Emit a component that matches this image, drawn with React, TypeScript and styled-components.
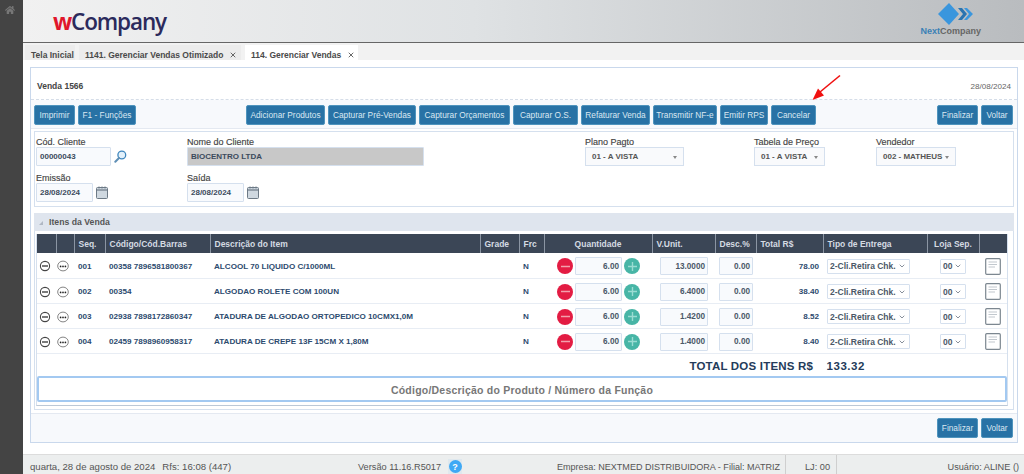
import React from "react";
import styled, { createGlobalStyle } from "styled-components";
import { FaHome } from "react-icons/fa";
import { X, ChevronDown } from "lucide-react";

const Global = createGlobalStyle`
  html, body { margin: 0; padding: 0; width: 1024px; height: 474px; overflow: hidden; background: #fff; }
  * { box-sizing: border-box; }
  body { font-family: "Liberation Sans", Arial, sans-serif; }
`;

const Page = styled.div`display: flex; width: 1024px; height: 474px; position: relative; overflow: hidden;`;
const Sidebar = styled.aside`width: 23px; background: #444; color: #777; padding: 5px 0 0 5px; font-size: 10px; flex: none;`;
const Main = styled.div`flex: 1; display: flex; flex-direction: column; min-width: 0;`;

const Header = styled.header`
  height: 43px; flex: none; display: flex; justify-content: space-between;
  background: linear-gradient(90deg, #f1f1f1 0%, #dfe2e4 45%, #b9bcbf 100%);
  border-bottom: 1px solid #666; padding: 7px 43px 0 30px;
`;
const Logo = styled.div`
  font-family: "Open Sans", sans-serif; font-weight: 600; font-size: 22.5px; line-height: 30px;
  letter-spacing: -1.15px; color: #2b2a5c;
`;
const LogoW = styled.span`color: #e0162b; font-weight: 700;`;
const Brand = styled.div`display: flex; flex-direction: column; align-items: center; margin-top: -5px;`;
const BrandMarkWrap = styled.div`margin-left: 10px; height: 23px;`;
const BrandText = styled.div`font-size: 9px; font-weight: 700; color: #666; line-height: 10px; margin-top: 1px;`;
const BrandNext = styled.span`color: #3a80b5;`;

const TabBar = styled.nav`height: 17px; flex: none; background: #f2f2f2; display: flex; padding: 2px 0 0 2px; gap: 4px;`;
const Tab = styled.div<{ $active?: boolean; $w: number }>`
  width: ${p => p.$w}px; padding: 4px 0 0 6px; display: flex; align-items: center; gap: 6px;
  background: ${p => (p.$active ? "#fff" : "#ececec")};
  font-size: 8.5px; font-weight: 700; color: #4a4a4a; white-space: nowrap;
  svg { flex: none; }
`;

const Content = styled.main`flex: 1; padding: 7px 6px 0 7px; background: #fff; min-height: 0;`;
const Panel = styled.section`border: 1px solid #c9d8ec; height: 376px; display: flex; flex-direction: column;`;
const PanelHead = styled.div`
  height: 32px; flex: none; display: flex; justify-content: space-between; align-items: flex-end;
  padding: 0 6px 8px 6px; border-bottom: 1px dashed #d5dde8;
  font-size: 8.1px; color: #666;
`;
const PanelTitle = styled.span`font-size: 8.5px; font-weight: 700; color: #444;`;
const Toolbar = styled.div`
  height: 29px; flex: none; background: #f7f9fc; border-bottom: 1px solid #e4e9f1;
  display: flex; align-items: flex-start; padding: 5px 4px 0 3px; gap: 3px;
`;
const Spacer = styled.div<{ $w?: number }>`${p => (p.$w ? `width:${p.$w}px;flex:none;` : "flex:1;")}`;
const Button = styled.button<{ $w: number }>`
  width: ${p => p.$w}px; height: 20px; padding: 0; flex: none;
  background: #2872a5; border: 1px solid #4f94bd; border-radius: 2px;
  color: #dbe8f2; font: 400 8.3px "Liberation Sans", sans-serif; white-space: nowrap;
`;

const FormBox = styled.div`
  margin: 2px 3px 0; height: 76px; border: 1px solid #d5e0ee; padding: 3px 0 0 1px;
  display: grid; grid-template-columns: 151px 398px 169px 122px 1fr; grid-template-rows: 31px 31px; row-gap: 5px;
`;
const Field = styled.div`display: flex; flex-direction: column; align-items: flex-start;`;
const Label = styled.label`font-size: 9px; color: #444; line-height: 14px; height: 12px; -webkit-text-stroke: 0.15px #444;`;
const InputRow = styled.div`display: flex; align-items: center; gap: 3px;`;
const TextBox = styled.div<{ $w: number; $disabled?: boolean }>`
  width: ${p => p.$w}px; height: 19px; display: flex; align-items: center; padding-left: 3px;
  background: ${p => (p.$disabled ? "#c8c8c8" : "#f8fafd")};
  border: 1px solid #d5e0ee; border-radius: 1px;
  font-size: 8px; font-weight: 700; color: #3b4a5c;
`;
const FormSelect = styled.div<{ $w: number }>`
  width: ${p => p.$w}px; height: 19px; display: flex; align-items: center; justify-content: space-between;
  padding: 0 6px; background: #f9fafc; border: 1px solid #d5e0ee; white-space: nowrap;
  font-size: 8px; font-weight: 700; color: #555;
`;
const Caret = styled.span`width: 0; height: 0; border: 2.5px solid transparent; border-top: 3px solid #888; margin-top: 3px;`;

const ItemsPanel = styled.div`margin: 6px 3px 0; height: 197px; border: 1px solid #d5e0ee; border-top: 0; display: flex; flex-direction: column; flex: none;`;
const ItemsHead = styled.div`
  height: 18px; flex: none; background: #dfe5ee; display: flex; align-items: center; gap: 6px; margin: 0 -1px; padding-left: 5px;
  font-size: 8.7px; font-weight: 700; color: #555;
`;
const Corner = styled.span`width: 0; height: 0; border-left: 4px solid transparent; border-bottom: 4px solid #b0b8c4; margin-top: 2px;`;
const ItemsBody = styled.div`padding: 3px 5px 3px 1px; flex: 1; display: flex; min-height: 0;`;
const TableFrame = styled.div`flex: 1; border: 1px solid #d5e0ee; border-top: 0; border-bottom-color: #bcc8d6;`;

const Table = styled.table`
  width: 970px; border-collapse: collapse; table-layout: fixed; font-size: 8.1px;
`;
const Col = styled.col<{ $w: number }>`width: ${p => p.$w}px;`;
const Th = styled.th<{ $align?: string }>`
  height: 19px; padding: 0 4px; background: #3b4656; color: #d5dbe3; font-weight: 700; font-size: 8.5px;
  text-align: ${p => p.$align || "left"}; border-left: 1px solid #8b95a3; white-space: nowrap;
  &:first-child { border-left: 0; }
`;
const Tr = styled.tr`border-bottom: 1px solid #e8edf4;`;
const Td = styled.td<{ $align?: string }>`
  height: 25px; padding: 2px 4px 0; font-weight: 700; color: #2c4a6e; white-space: nowrap;
  text-align: ${p => p.$align || "left"}; vertical-align: middle;
`;
const IconTd = styled(Td)`padding: 2px 4px 0 0;`;
const TotalCell = styled.td`height: 22px; padding: 3px 142px 0 0; text-align: right; font-weight: 700; font-size: 11.5px; color: #243b5a; letter-spacing: 0.2px;`;
const TotalValue = styled.span`margin-left: 10px; letter-spacing: 0.55px;`;
const Stepper = styled.div`display: flex; align-items: center; justify-content: flex-end; gap: 2px; padding-right: 8px;`;
const Round = styled.span<{ $bg: string }>`
  width: 16px; height: 16px; border-radius: 50%; background: ${p => p.$bg}; flex: none; display: flex; align-items: center; justify-content: center;
`;
const NumBox = styled.div<{ $w: number; $ml?: number }>`
  width: ${p => p.$w}px; height: 18px; margin-left: ${p => p.$ml || 0}px; display: flex; align-items: center; justify-content: flex-end; padding-right: 2px;
  background: #f8fafd; border: 1px solid #d5e0ee; border-radius: 1px; color: #4b5868; font-size: 8.2px; font-weight: 700;
`;
const CellSelect = styled.div<{ $w: number }>`
  width: ${p => p.$w}px; height: 15px; display: flex; align-items: center; justify-content: space-between; padding: 0 3px 0 2px;
  background: #fff; border: 1px solid #d5e0ee; border-radius: 1px; color: #4b5868; font-size: 8.5px; font-weight: 700;
`;
const Centered = styled.div`display: flex; justify-content: center;`;

const SearchBox = styled.div`
  margin-top: 1px; width: 970px; height: 26px; border: 2px solid #a3c9f1; border-radius: 2px; background: #fff;
  display: flex; align-items: center; justify-content: center; padding-top: 1px;
  font-size: 10.5px; font-weight: 700; color: #777; letter-spacing: 0.22px;
`;
const FootBar = styled.div`
  margin-top: 3px; flex: 1; background: #f7f9fc; border-top: 1px solid #e4e9f1; display: flex; justify-content: flex-end; gap: 3px; padding: 4px 4px 0 0;
`;

const Status = styled.footer`
  height: 20px; flex: none; background: #eceeee; border-top: 1px solid #dcdcdc; display: flex; align-items: stretch;
  color: #555; white-space: nowrap;
`;
const StatusCell = styled.div<{ $w: number; $size: number; $divider?: boolean; $right?: boolean; $pl?: number; $pr?: number }>`
  width: ${p => p.$w}px; flex: none; display: flex; align-items: center; gap: 7px;
  font-size: ${p => p.$size}px; padding: 4px ${p => p.$pr || 0}px 0 ${p => p.$pl || 0}px;
  justify-content: ${p => (p.$right ? "flex-end" : "flex-start")};
  ${p => (p.$divider ? "border-left: 1px solid #cfcfcf;" : "")}
`;
const HelpWrap = styled.span`width: 14px; height: 15px; background: #dfe8ee; display: flex; align-items: center; justify-content: center;`;
const Help = styled.span`width: 13px; height: 13px; border-radius: 50%; background: #3fa9f5; color: #fff; font-size: 9px; font-weight: 700; display: flex; align-items: center; justify-content: center;`;

const ArrowOverlay = styled.svg`position: absolute; left: 808px; top: 72px; pointer-events: none;`;

const Search = () => (
  <svg width="13" height="13" viewBox="0 0 13 13" fill="none">
    <circle cx="7.8" cy="5" r="3.9" fill="#e3f1fb" stroke="#3f86bd" strokeWidth="1.3" />
    <path d="M5 8 L1.3 11.8" stroke="#5f8fb5" strokeWidth="2" strokeLinecap="round" />
  </svg>
);
const Calendar = () => (
  <svg width="12" height="13" viewBox="0 0 12 13" fill="none">
    <rect x="0.5" y="1.5" width="11" height="11" rx="1" fill="#cfd8e0" stroke="#6d7a86" />
    <path d="M0.5 4 H11.5" stroke="#6d7a86" strokeWidth="1.2" />
    <path d="M3 0.5 V2.5 M6 0.5 V2.5 M9 0.5 V2.5" stroke="#6d7a86" />
  </svg>
);
const BrandMark = () => (
  <svg width="36" height="24" viewBox="0 0 36 24">
    <path d="M11 1 L21 12 L11 23 L0 12 Z" fill="#3a96dd" />
    <path d="M20 6 L24 6 L29 12 L24 18 L20 18 L25 12 Z" fill="#2a74b0" />
    <path d="M26 6 L29 6 L35 12 L29 18 L26 18 L31 12 Z" fill="#3a96dd" />
  </svg>
);
const RemoveIcon = () => (
  <svg width="12" height="12" viewBox="0 0 12 12" fill="none">
    <circle cx="6" cy="6" r="4.6" stroke="#444" strokeWidth="1.1" />
    <path d="M3 6 H9" stroke="#333" strokeWidth="1.3" />
  </svg>
);
const MoreIcon = () => (
  <svg width="12" height="12" viewBox="0 0 12 12" fill="none">
    <ellipse cx="6" cy="6" rx="5.3" ry="4.9" stroke="#666" strokeWidth="0.8" />
    <circle cx="3.6" cy="6.4" r="0.85" fill="#222" />
    <circle cx="6" cy="6.4" r="0.85" fill="#222" />
    <circle cx="8.4" cy="6.4" r="0.85" fill="#222" />
  </svg>
);
const MinusGlyph = () => (
  <svg width="11" height="11" viewBox="0 0 11 11"><path d="M1 5.5 H10" stroke="#f2a0ac" strokeWidth="1.5" /></svg>
);
const PlusGlyph = () => (
  <svg width="11" height="11" viewBox="0 0 11 11"><path d="M1 5.5 H10 M5.5 1 V10" stroke="#9adcd2" strokeWidth="1.4" /></svg>
);
const NoteIcon = () => (
  <svg width="16" height="17" viewBox="0 0 16 17" fill="none">
    <rect x="0.7" y="0.7" width="14.6" height="15.6" rx="1" fill="#fff" stroke="#7c8790" strokeWidth="1.2" />
    <path d="M3.5 4 H12 M3.5 6.5 H12 M3.5 9 H10" stroke="#c2c8ce" strokeWidth="1.1" />
  </svg>
);

const toolbarLeft = [["Imprimir", 41], ["F1 - Funções", 58]] as const;
const toolbarMid = [
  ["Adicionar Produtos", 79], ["Capturar Pré-Vendas", 88], ["Capturar Orçamentos", 91], ["Capturar O.S.", 65],
  ["Refaturar Venda", 69], ["Transmitir NF-e", 64], ["Emitir RPS", 48], ["Cancelar", 45],
] as const;

const columns = [19, 18, 31, 105, 270, 39, 25, 108, 63, 41, 67, 104, 52, 28];
const heads: [string, string?][] = [
  [""], [""], ["Seq."], ["Código/Cód.Barras"], ["Descrição do Item"], ["Grade"], ["Frc"],
  ["Quantidade", "center"], ["V.Unit."], ["Desc.%"], ["Total R$"], ["Tipo de Entrega"], ["Loja Sep.", "center"], [""],
];
const rows = [
  ["001", "00358 7896581800367", "ALCOOL 70 LIQUIDO C/1000ML", "13.0000", "78.00"],
  ["002", "00354", "ALGODAO ROLETE COM 100UN", "6.4000", "38.40"],
  ["003", "02938 7898172860347", "ATADURA DE ALGODAO ORTOPEDICO 10CMX1,0M", "1.4200", "8.52"],
  ["004", "02459 7898960958317", "ATADURA DE CREPE 13F 15CM X 1,80M", "1.4000", "8.40"],
];

export default function App() {
  return (
    <Page>
      <Global />
      <Sidebar><FaHome size={10} /></Sidebar>
      <Main>
        <Header>
          <Logo><LogoW>w</LogoW>Company</Logo>
          <Brand>
            <BrandMarkWrap><BrandMark /></BrandMarkWrap>
            <BrandText><BrandNext>Next</BrandNext>Company</BrandText>
          </Brand>
        </Header>
        <TabBar>
          <Tab $w={50}>Tela Inicial</Tab>
          <Tab $w={162}>1141. Gerenciar Vendas Otimizado <X size={8} strokeWidth={2.5} /></Tab>
          <Tab $w={113} $active>114. Gerenciar Vendas <X size={8} strokeWidth={2.5} /></Tab>
        </TabBar>
        <Content>
          <Panel>
            <PanelHead><PanelTitle>Venda 1566</PanelTitle><span>28/08/2024</span></PanelHead>
            <Toolbar>
              {toolbarLeft.map(([t, w]) => <Button key={t} $w={w}>{t}</Button>)}
              <Spacer $w={104} />
              {toolbarMid.map(([t, w]) => <Button key={t} $w={w}>{t}</Button>)}
              <Spacer />
              <Button $w={41}>Finalizar</Button>
              <Button $w={32}>Voltar</Button>
            </Toolbar>
            <FormBox>
              <Field>
                <Label>Cód. Cliente</Label>
                <InputRow><TextBox $w={75}>00000043</TextBox><Search /></InputRow>
              </Field>
              <Field>
                <Label>Nome do Cliente</Label>
                <TextBox $w={237} $disabled>BIOCENTRO LTDA</TextBox>
              </Field>
              <Field>
                <Label>Plano Pagto</Label>
                <FormSelect $w={99}>01 - A VISTA<Caret /></FormSelect>
              </Field>
              <Field>
                <Label>Tabela de Preço</Label>
                <FormSelect $w={71}>01 - A VISTA<Caret /></FormSelect>
              </Field>
              <Field>
                <Label>Vendedor</Label>
                <FormSelect $w={80}>002 - MATHEUS<Caret /></FormSelect>
              </Field>
              <Field>
                <Label>Emissão</Label>
                <InputRow><TextBox $w={57}>28/08/2024</TextBox><Calendar /></InputRow>
              </Field>
              <Field>
                <Label>Saída</Label>
                <InputRow><TextBox $w={57}>28/08/2024</TextBox><Calendar /></InputRow>
              </Field>
            </FormBox>
            <ItemsPanel>
              <ItemsHead><Corner />Itens da Venda</ItemsHead>
              <ItemsBody>
                <TableFrame>
                  <Table>
                    <colgroup>{columns.map((w, i) => <Col key={i} $w={w} />)}</colgroup>
                    <thead>
                      <tr>{heads.map(([t, a], i) => <Th key={i} $align={a}>{t}</Th>)}</tr>
                    </thead>
                    <tbody>
                      {rows.map(r => (
                        <Tr key={r[0]}>
                          <IconTd><Centered><RemoveIcon /></Centered></IconTd>
                          <IconTd><Centered><MoreIcon /></Centered></IconTd>
                          <Td>{r[0]}</Td>
                          <Td>{r[1]}</Td>
                          <Td>{r[2]}</Td>
                          <Td />
                          <Td>N</Td>
                          <Td>
                            <Stepper>
                              <Round $bg="#e31c43"><MinusGlyph /></Round>
                              <NumBox $w={47}>6.00</NumBox>
                              <Round $bg="#47b5a6"><PlusGlyph /></Round>
                            </Stepper>
                          </Td>
                          <Td><NumBox $w={48} $ml={4}>{r[3]}</NumBox></Td>
                          <Td><NumBox $w={34}>0.00</NumBox></Td>
                          <Td $align="right">{r[4]}</Td>
                          <Td><CellSelect $w={83}>2-Cli.Retira Chk.<ChevronDown size={8} strokeWidth={2} /></CellSelect></Td>
                          <Td><Centered><CellSelect $w={26}>00<ChevronDown size={8} strokeWidth={2} /></CellSelect></Centered></Td>
                          <Td><Centered><NoteIcon /></Centered></Td>
                        </Tr>
                      ))}
                      <tr>
                        <TotalCell colSpan={14}>TOTAL DOS ITENS R$ <TotalValue>133.32</TotalValue></TotalCell>
                      </tr>
                    </tbody>
                  </Table>
                  <SearchBox>Código/Descrição do Produto / Número da Função</SearchBox>
                </TableFrame>
              </ItemsBody>
            </ItemsPanel>
            <FootBar>
              <Button $w={41}>Finalizar</Button>
              <Button $w={32}>Voltar</Button>
            </FootBar>
          </Panel>
        </Content>
        <Status>
          <StatusCell $w={335} $size={9.6} $pl={7}>quarta, 28 de agosto de 2024<span>Rfs: 16:08 (447)</span></StatusCell>
          <StatusCell $w={200} $size={9.2}>Versão 11.16.R5017<HelpWrap><Help>?</Help></HelpWrap></StatusCell>
          <StatusCell $w={227} $size={9.05} $right $pr={5}>Empresa: NEXTMED DISTRIBUIDORA - Filial: MATRIZ</StatusCell>
          <StatusCell $w={51} $size={9.2} $divider $pl={19}>LJ: 00</StatusCell>
          <StatusCell $w={188} $size={9.2} $divider $right $pr={5}>Usuário: ALINE ()</StatusCell>
        </Status>
      </Main>
      <ArrowOverlay width="36" height="32" viewBox="0 0 36 32">
        <path d="M32 3.5 L12 20" stroke="#f01010" strokeWidth="1.6" />
        <path d="M4.5 28 L10 16.5 L16 23.5 Z" fill="#f01010" />
      </ArrowOverlay>
    </Page>
  );
}
